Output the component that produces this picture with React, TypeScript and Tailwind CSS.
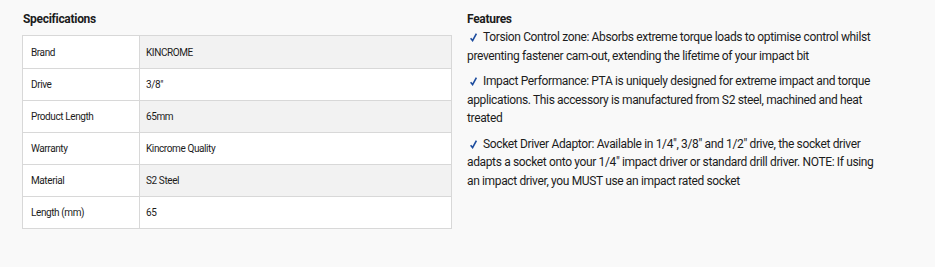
import React from 'react';

const specs = [
  { label: 'Brand', value: 'KINCROME' },
  { label: 'Drive', value: '3/8"' },
  { label: 'Product Length', value: '65mm' },
  { label: 'Warranty', value: 'Kincrome Quality' },
  { label: 'Material', value: 'S2 Steel' },
  { label: 'Length (mm)', value: '65' },
];

const features = [
  'Torsion Control zone: Absorbs extreme torque loads to optimise control whilst preventing fastener cam-out, extending the lifetime of your impact bit',
  'Impact Performance: PTA is uniquely designed for extreme impact and torque applications. This accessory is manufactured from S2 steel, machined and heat treated',
  'Socket Driver Adaptor: Available in 1/4", 3/8" and 1/2" drive, the socket driver adapts a socket onto your 1/4" impact driver or standard drill driver. NOTE: If using an impact driver, you MUST use an impact rated socket',
];

const Tick = () => (
  <svg
    viewBox="0 0 7 9"
    className="inline-block w-[7px] h-[9px] ml-[3px] mr-[6px] align-[-1px]"
    fill="none"
    stroke="#1d4c9e"
    strokeWidth="1.6"
  >
    <path d="M0.6 5.2 L2.6 7.6 L6.4 0.6" />
  </svg>
);

export default function App() {
  return (
    <div className="w-[935px] h-[267px] bg-[#f9f9f9] text-[#1c1c1c] font-['Roboto',sans-serif] flex gap-[15px] pl-[22px] pt-[11px]">
      {/* Specifications table */}
      <div className="w-[430px] shrink-0">
        <h3 className="text-[12px] font-bold leading-[16px] pl-[1px] tracking-[-0.3px]">Specifications</h3>
        <div className="mt-[8px] border border-[#d8d8d8] bg-white">
          {specs.map((row, i) => (
            <div
              key={row.label}
              className={`flex h-[32px] text-[10px] tracking-[-0.4px] ${i > 0 ? 'border-t border-[#d8d8d8]' : ''}`}
            >
              <div className="w-[117px] shrink-0 flex items-center pl-[8px] bg-white border-r border-[#d8d8d8]">
                {row.label}
              </div>
              <div className={`flex-1 flex items-center pl-[6px] ${i % 2 === 0 ? 'bg-[#f2f2f2]' : 'bg-white'}`}>
                {row.value}
              </div>
            </div>
          ))}
        </div>
      </div>

      {/* Features list */}
      <div className="w-[421px] shrink-0">
        <h3 className="text-[12px] font-bold leading-[16px] tracking-[-0.3px]">Features</h3>
        <div className="text-[12px] leading-[18.5px] tracking-[-0.36px] mt-[1px]">
          {features.map((f, i) => (
            <p key={i} className={i > 0 ? 'mt-[7px]' : ''}>
              <Tick />
              {f}
            </p>
          ))}
        </div>
      </div>
    </div>
  );
}
